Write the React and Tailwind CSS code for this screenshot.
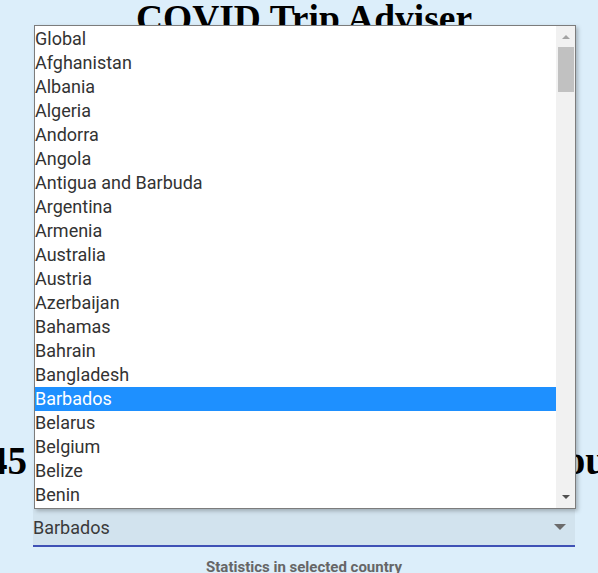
import React from 'react'

const countries = [
  'Global', 'Afghanistan', 'Albania', 'Algeria', 'Andorra', 'Angola',
  'Antigua and Barbuda', 'Argentina', 'Armenia', 'Australia', 'Austria',
  'Azerbaijan', 'Bahamas', 'Bahrain', 'Bangladesh', 'Barbados', 'Belarus',
  'Belgium', 'Belize', 'Benin'
]

export default function App() {
  const selected = 'Barbados'

  return (
    <div className="relative min-h-screen bg-[#dceefa] overflow-hidden">
      <h1 className="text-center pl-[10px] text-[37.5px] leading-[38px] font-bold text-black whitespace-nowrap" style={{ fontFamily: '"Liberation Serif", serif' }}>
        COVID Trip Adviser
      </h1>

      {/* content hidden behind the open list */}
      <div className="h-[401px]" />

      <div className="flex justify-between text-[39px] leading-[44px] font-bold text-black whitespace-nowrap" style={{ fontFamily: '"Liberation Serif", serif' }}>
        <span className="-ml-[12px]">45</span>
        <span className="mr-[-9px]">you</span>
      </div>

      <div className="mt-[26px] ml-[33px] w-[542px] h-[38px] bg-[#d2e3ee] border-b-2 border-[#3f51b5] flex items-center justify-between" style={{ fontFamily: 'Roboto, sans-serif' }}>
        <span className="text-[18px] text-[#3a3a3a]">Barbados</span>
        <svg width="12" height="6" viewBox="0 0 12 6" className="mr-[9px]">
          <path d="M0 0 L12 0 L6 6 Z" fill="#6b6b6b" />
        </svg>
      </div>

      <p className="mt-[10px] text-center pl-[10px] text-[15px] leading-[20px] font-bold text-[#666]" style={{ fontFamily: 'Roboto, sans-serif' }}>
        Statistics in selected country
      </p>

      {/* opened native list */}
      <div className="absolute left-[34px] top-[25px] w-[542px] h-[484px] bg-white border border-[#7c7c7c] shadow-[2px_2px_4px_rgba(0,0,0,0.25)] flex" style={{ fontFamily: 'Roboto, sans-serif' }}>
        <div className="flex-1 pt-[1px]">
          {countries.map(c => (
            <div
              key={c}
              className={
                c === selected
                  ? 'h-[24px] leading-[24px] text-[18px] bg-[#1e90ff] text-white'
                  : 'h-[24px] leading-[24px] text-[18px] text-[#333]'
              }
            >
              {c}
            </div>
          ))}
        </div>
        <div className="w-[19px] bg-[#f1f1f1] flex flex-col items-center">
          <svg width="8" height="4" viewBox="0 0 8 4" className="mt-[9px]">
            <path d="M0 4 L8 4 L4 0 Z" fill="#a3a3a3" />
          </svg>
          <div className="mt-[8px] w-[16px] h-[45px] bg-[#c1c1c1]" />
          <div className="flex-1" />
          <svg width="8" height="4" viewBox="0 0 8 4" className="mb-[9px]">
            <path d="M0 0 L8 0 L4 4 Z" fill="#505050" />
          </svg>
        </div>
      </div>
    </div>
  )
}
